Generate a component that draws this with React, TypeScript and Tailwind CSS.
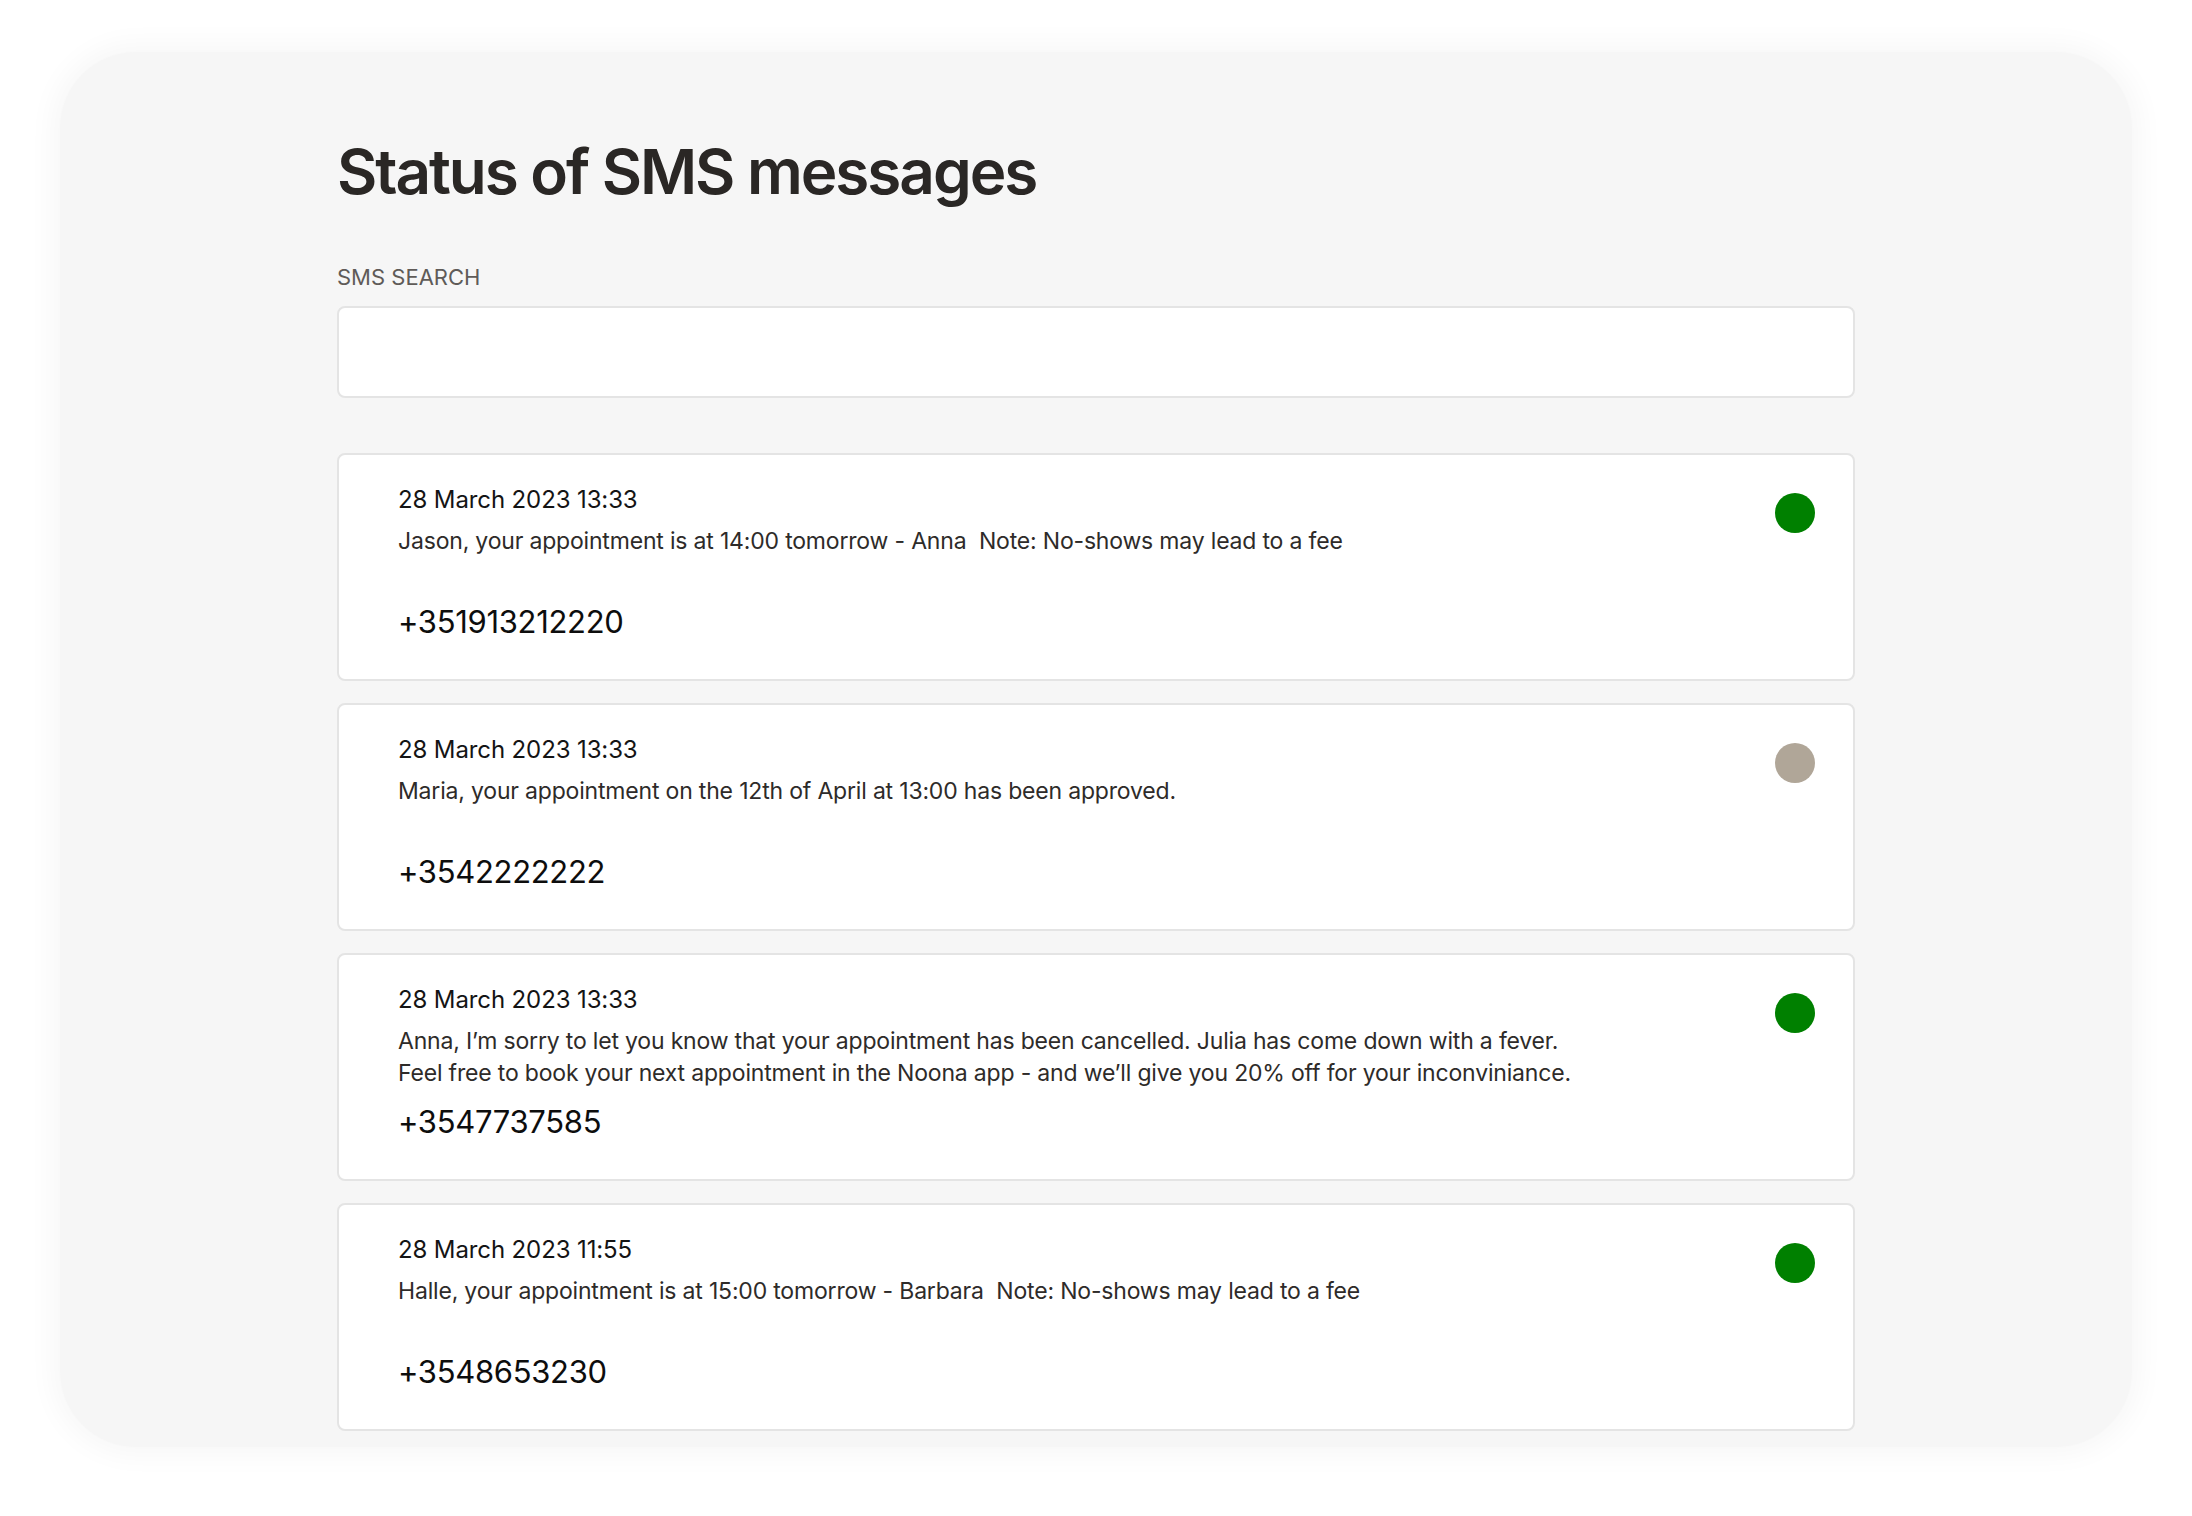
import React from "react";

type Msg = {
  date: string;
  lines: string[];
  phone: string;
  status: "sent" | "pending";
};

const messages: Msg[] = [
  {
    date: "28 March 2023 13:33",
    lines: ["Jason, your appointment is at 14:00 tomorrow - Anna\u00a0 Note: No-shows may lead to a fee"],
    phone: "+351913212220",
    status: "sent",
  },
  {
    date: "28 March 2023 13:33",
    lines: ["Maria, your appointment on the 12th of April at 13:00 has been approved."],
    phone: "+3542222222",
    status: "pending",
  },
  {
    date: "28 March 2023 13:33",
    lines: [
      "Anna, I\u2019m sorry to let you know that your appointment has been cancelled. Julia has come down with a fever.",
      "Feel free to book your next appointment in the Noona app - and we\u2019ll give you 20% off for your inconviniance.",
    ],
    phone: "+3547737585",
    status: "sent",
  },
  {
    date: "28 March 2023 11:55",
    lines: ["Halle, your appointment is at 15:00 tomorrow - Barbara\u00a0 Note: No-shows may lead to a fee"],
    phone: "+3548653230",
    status: "sent",
  },
];

function Card({ m }: { m: Msg }) {
  return (
    <div className="flex h-[228px] w-full items-start justify-between rounded-[8px] border-2 border-[#e4e4e4] bg-white pl-[59px] pr-[38px] pt-[29px]">
      <div className="flex flex-col">
        <div className="text-[24px] leading-[32px] tracking-[-0.005em] text-[#141414]">{m.date}</div>
        <div className="mt-[9px] min-h-[64px] text-[23px] leading-[32px] tracking-[-0.008em] text-[#2e2b29]">
          {m.lines.map((l, i) => (
            <div key={i}>{l}</div>
          ))}
        </div>
        <div className="mt-[13px] text-[31px] leading-[40px] tracking-[-0.01em] text-[#0d0d0d]">{m.phone}</div>
      </div>
      <div
        className={
          m.status === "sent"
            ? "mt-[9px] h-[40px] w-[40px] shrink-0 rounded-full bg-[#008000]"
            : "mt-[9px] h-[40px] w-[40px] shrink-0 rounded-full bg-[#b0a698]"
        }
      />
    </div>
  );
}

export default function App() {
  return (
    <div
      className="h-[1516px] w-[2192px] overflow-hidden bg-white pl-[60px] pt-[52px]"
      style={{ fontFamily: "Inter, 'Noto Sans', sans-serif" }}
    >
      <div className="h-[1395px] w-[2072px] rounded-[76px] bg-[#f6f6f6] pl-[277px] pt-[89px] shadow-[0_0_28px_8px_rgba(0,0,0,0.035)]">
        <div className="w-[1518px]">
          <h1 className="text-[62px] font-semibold leading-[62px] tracking-[-0.033em] text-[#2a2725]">
            Status of SMS messages
          </h1>
          <div className="mt-[60px] text-[22px] leading-[28px] text-[#5f5b58]">SMS SEARCH</div>
          <div className="mt-[15px] h-[92px] w-full rounded-[8px] border-2 border-[#e4e4e4] bg-white" />
          <div className="mt-[55px] flex flex-col gap-[22px]">
            {messages.map((m, i) => (
              <Card key={i} m={m} />
            ))}
          </div>
        </div>
      </div>
    </div>
  );
}
